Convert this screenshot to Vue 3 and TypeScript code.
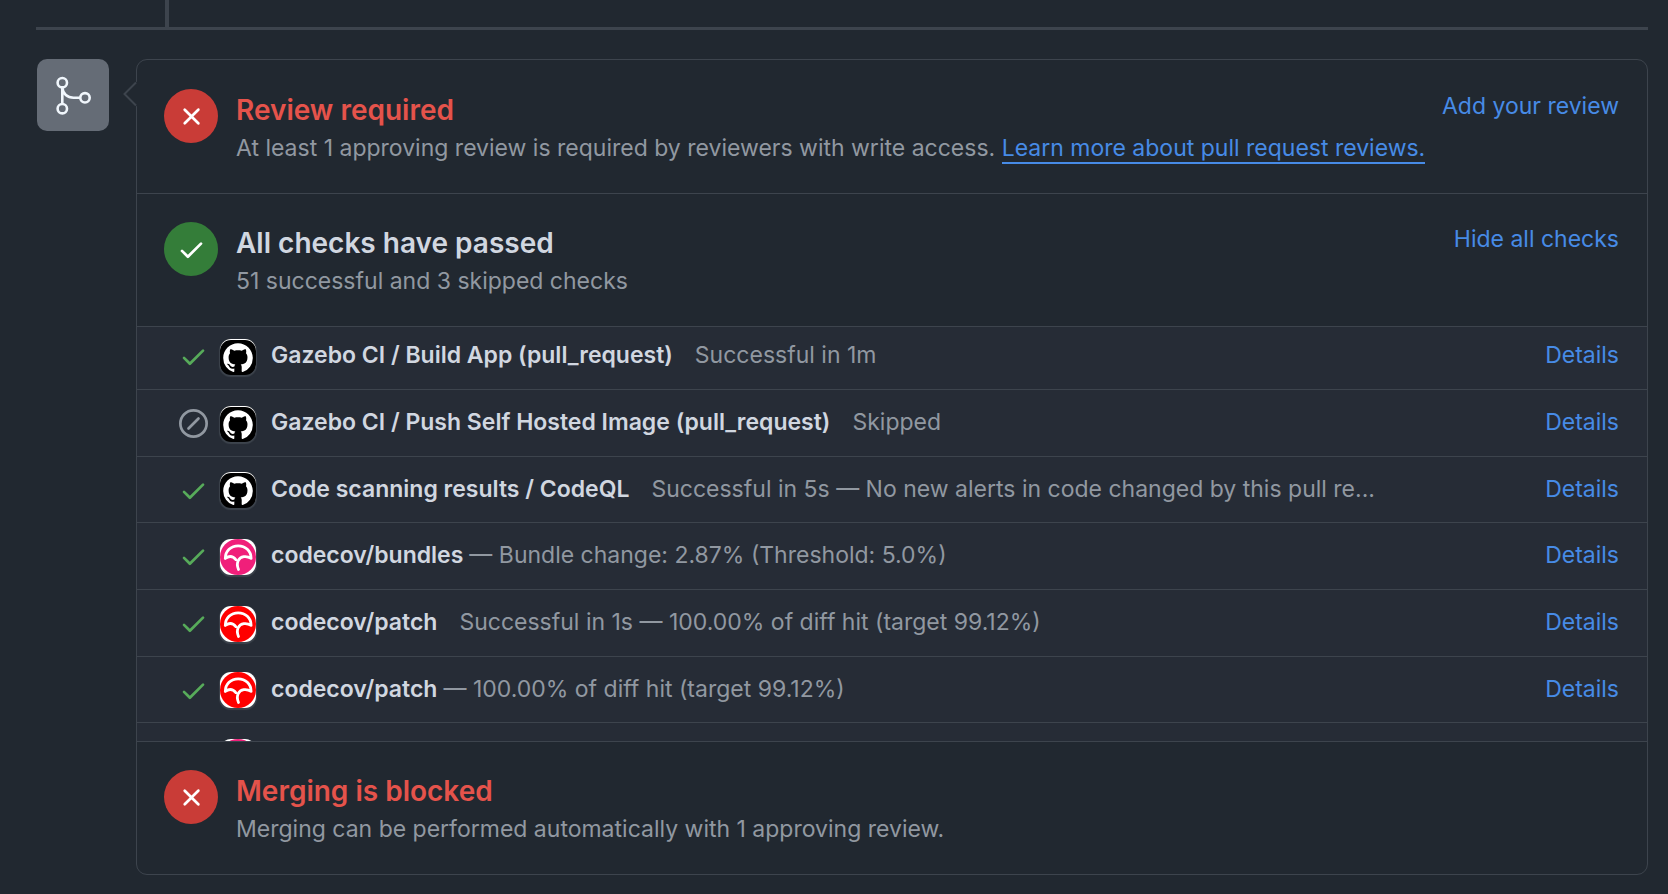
<script setup lang="ts">
type AppKind = 'github' | 'codecov-pink' | 'codecov-red'

interface Check {
  id: number
  name: string
  app: AppKind
  skipped?: boolean
  status?: string
  description?: string
}

const checks: Check[] = [
  { id: 1, name: 'Gazebo CI / Build App (pull_request)', app: 'github', status: 'Successful in 1m' },
  { id: 2, name: 'Gazebo CI / Push Self Hosted Image (pull_request)', app: 'github', skipped: true, status: 'Skipped' },
  { id: 3, name: 'Code scanning results / CodeQL', app: 'github', status: 'Successful in 5s — No new alerts in code changed by this pull re...' },
  { id: 4, name: 'codecov/bundles', app: 'codecov-pink', description: '— Bundle change: 2.87% (Threshold: 5.0%)' },
  { id: 5, name: 'codecov/patch', app: 'codecov-red', status: 'Successful in 1s — 100.00% of diff hit (target 99.12%)' },
  { id: 6, name: 'codecov/patch', app: 'codecov-red', description: '— 100.00% of diff hit (target 99.12%)' },
  { id: 7, name: '', app: 'codecov-pink' },
]

const checkPath =
  'M13.78 4.22a.75.75 0 0 1 0 1.06l-7.25 7.25a.75.75 0 0 1-1.06 0L2.22 9.28a.751.751 0 0 1 .018-1.042.751.751 0 0 1 1.042-.018L6 10.94l6.72-6.72a.75.75 0 0 1 1.06 0Z'
const crossPath =
  'M3.72 3.72a.75.75 0 0 1 1.06 0L8 6.94l3.22-3.22a.749.749 0 0 1 1.275.326.749.749 0 0 1-.215.734L9.06 8l3.22 3.22a.749.749 0 0 1-.326 1.275.749.749 0 0 1-.734-.215L8 9.06l-3.22 3.22a.751.751 0 0 1-1.042-.018.751.751 0 0 1-.018-1.042L6.94 8 3.72 4.78a.75.75 0 0 1 0-1.06Z'
const skipPath =
  'M8 0a8 8 0 1 1 0 16A8 8 0 0 1 8 0ZM1.5 8a6.5 6.5 0 1 0 13 0 6.5 6.5 0 0 0-13 0Zm9.78-2.22-5.5 5.5a.749.749 0 0 1-1.275-.326.749.749 0 0 1 .215-.734l5.5-5.5a.751.751 0 0 1 1.042.018.751.751 0 0 1 .018 1.042Z'
const githubPath =
  'M8 0c4.42 0 8 3.58 8 8a8.013 8.013 0 0 1-5.45 7.59c-.4.08-.55-.17-.55-.38 0-.27.01-1.13.01-2.2 0-.75-.25-1.23-.54-1.48 1.78-.2 3.65-.88 3.65-3.95 0-.88-.31-1.59-.82-2.15.08-.2.36-1.02-.08-2.12 0 0-.67-.22-2.2.82-.64-.18-1.32-.27-2-.27-.68 0-1.36.09-2 .27-1.53-1.03-2.2-.82-2.2-.82-.44 1.1-.16 1.92-.08 2.12-.51.56-.82 1.28-.82 2.15 0 3.06 1.86 3.75 3.64 3.95-.23.2-.44.55-.51 1.07-.46.21-1.61.55-2.33-.66-.15-.24-.6-.83-1.23-.82-.67.01-.27.38.01.53.34.19.73.9.82 1.13.16.45.68 1.31 2.69.94 0 .67.01 1.3.01 1.49 0 .21-.15.45-.55.38A7.995 7.995 0 0 1 0 8c0-4.42 3.58-8 8-8Z'
</script>

<template>
  <main class="page">
    <div class="timeline-end"><span class="timeline-line"></span></div>
    <div class="merge">
      <div class="merge-badge">
        <svg viewBox="0 0 72 72" fill="none" stroke="currentColor" stroke-width="2.6" aria-hidden="true">
          <circle cx="25.3" cy="23.7" r="4.7" />
          <circle cx="25.3" cy="49.7" r="4.7" />
          <circle cx="48" cy="38.8" r="4.7" />
          <path d="M25.3 28.4V45M25.3 28.4C25.8 35 30.5 38.8 36.5 38.8H43.3" />
        </svg>
      </div>
      <div class="box">
        <svg class="caret" viewBox="0 0 14 28" aria-hidden="true">
          <path class="caret-fill" d="M14 1.500 1.500 14 14 26.500Z" />
          <path class="caret-line" d="M13 2.500 1.500 14 13 25.500" />
        </svg>

        <section class="section">
          <span class="status status-danger">
            <svg viewBox="0 0 16 16" aria-hidden="true"><path :d="crossPath" /></svg>
          </span>
          <div class="summary">
            <h3 class="title title-danger">Review required</h3>
            <p class="text">
              At least 1 approving review is required by reviewers with write access.
              <a class="link link-underlined" href="#reviews">Learn more about pull request reviews.</a>
            </p>
          </div>
          <a class="link action" href="#review">Add your review</a>
        </section>

        <section class="section">
          <span class="status status-success">
            <svg viewBox="0 0 16 16" aria-hidden="true"><path :d="checkPath" /></svg>
          </span>
          <div class="summary">
            <h3 class="title">All checks have passed</h3>
            <p class="text">51 successful and 3 skipped checks</p>
          </div>
          <button class="link action" type="button">Hide all checks</button>
        </section>

        <div class="checks-view">
          <ul class="checks">
            <li v-for="check in checks" :key="check.id" class="check">
              <svg class="check-state" :class="{ skipped: check.skipped }" viewBox="0 0 16 16" aria-hidden="true">
                <path :d="check.skipped ? skipPath : checkPath" />
              </svg>
              <span class="avatar" :class="check.app">
                <svg v-if="check.app === 'github'" viewBox="0 0 36 36" aria-hidden="true">
                  <path transform="translate(3.200 4.200) scale(1.85)" fill="#fff" :d="githubPath" />
                </svg>
                <svg v-else viewBox="0 0 36 36" aria-hidden="true">
                  <circle class="disc" cx="18" cy="18" r="18" />
                  <path
                    class="umbrella"
                    d="M15.800 20.600C13 17.200 9 16.800 5.300 19.400C5.300 12 11 6.800 18.200 6.800S31.100 12 31.100 19.400C26.500 16.400 20.500 17 18.200 21.700C16.700 24.700 17.300 27.600 18.500 30.500"
                  />
                </svg>
              </span>
              <p class="check-text">
                <strong class="check-name">{{ check.name }}</strong>
                <span v-if="check.status" class="check-status">{{ check.status }}</span>
                <span v-if="check.description" class="check-description">{{ check.description }}</span>
              </p>
              <a v-if="check.name" class="link" :href="`#check-${check.id}`">Details</a>
            </li>
          </ul>
        </div>

        <section class="section">
          <span class="status status-danger">
            <svg viewBox="0 0 16 16" aria-hidden="true"><path :d="crossPath" /></svg>
          </span>
          <div class="summary">
            <h3 class="title title-danger">Merging is blocked</h3>
            <p class="text">Merging can be performed automatically with 1 approving review.</p>
          </div>
        </section>
      </div>
    </div>
  </main>
</template>

<style>
body {
  margin: 0;
  background: #212830;
}
</style>

<style scoped>
.page {
  box-sizing: border-box;
  padding: 0 20px 16px 36px;
  background: #212830;
  color: #d1d7e0;
  font-family: Inter, "Liberation Sans", sans-serif;
  font-size: 23px;
  line-height: 36px;
}
.timeline-end {
  display: flex;
  height: 27px;
  padding-left: 129px;
  border-bottom: 3px solid #3d444d;
}
.timeline-line {
  width: 4px;
  background: #3d444d;
}
.merge {
  display: flex;
  align-items: flex-start;
  gap: 27px;
  padding: 29px 0 0 1px;
}
.merge-badge {
  flex: none;
  width: 72px;
  height: 72px;
  border-radius: 10px;
  background: #656c76;
  color: #f0f6fc;
}
.merge-badge svg {
  display: block;
}
.box {
  position: relative;
  flex: 1;
  min-width: 0;
  padding-top: 1px;
  border: 1px solid #3d444d;
  border-radius: 11px;
}
.caret {
  position: absolute;
  top: 20px;
  left: -14px;
  width: 14px;
  height: 28px;
}
.caret-fill {
  fill: #212830;
}
.caret-line {
  fill: none;
  stroke: #3d444d;
  stroke-width: 2;
}
.section {
  display: flex;
  align-items: flex-start;
  padding: 28px 28px 26px 27px;
}
.section + .section {
  border-top: 1px solid #3d444d;
}
.status {
  display: flex;
  flex: none;
  align-items: center;
  justify-content: center;
  width: 54px;
  height: 54px;
  border-radius: 50%;
}
.status svg {
  width: 29px;
  height: 29px;
  fill: #fff;
}
.status-danger {
  background: #c93c37;
}
.status-success {
  background: #347d39;
}
.summary {
  flex: 1;
  min-width: 0;
  padding: 2px 0 0 18px;
}
.title {
  margin: 0;
  font-size: 28px;
  font-weight: 600;
  line-height: 38px;
}
.title-danger {
  color: #e5534b;
}
.text {
  margin: 0;
  color: #9198a1;
  line-height: 38px;
}
.link {
  flex: none;
  color: #478be6;
  text-decoration: none;
}
.link-underlined {
  border-bottom: 2px solid #478be6;
}
.action {
  padding: 0;
  border: 0;
  background: none;
  font: inherit;
  line-height: 34px;
  cursor: pointer;
}
.checks-view {
  height: 414px;
  overflow: hidden;
  border-top: 1px solid #3d444d;
  border-bottom: 1px solid #3d444d;
  background: #262c36;
}
.checks {
  display: grid;
  grid-auto-rows: 67px 67px 66px;
  margin: -4px 0 0;
  padding: 0;
  list-style: none;
}
.check {
  display: flex;
  align-items: center;
  box-sizing: border-box;
  min-width: 0;
  padding: 0 28px 2px 42px;
  border-bottom: 1px solid #3d444d;
}
.check-state {
  flex: none;
  width: 29px;
  height: 29px;
  margin-top: 3px;
  fill: #57ab5a;
}
.check-state.skipped {
  fill: #9198a1;
}
.avatar {
  flex: none;
  width: 36px;
  height: 36px;
  margin: 3px 15px 0 12px;
  border-radius: 11px;
  overflow: hidden;
  background: #fff;
  box-shadow: 0 1px 1px 1px #3d444d;
}
.avatar svg {
  display: block;
}
.github {
  background: #000;
  box-shadow: 0 1px 1px 1px #3d444d, inset 0 1px 0 #fff;
}
.codecov-pink {
  color: #f01f7a;
}
.codecov-red {
  color: #ff0000;
}
.disc {
  fill: currentColor;
}
.umbrella {
  fill: none;
  stroke: #fff;
  stroke-width: 2.8;
  stroke-linecap: round;
  stroke-linejoin: round;
}
.check-text {
  flex: 1;
  min-width: 0;
  margin: 0 160px 0 0;
  overflow: hidden;
  color: #9198a1;
  text-overflow: ellipsis;
  white-space: nowrap;
}
.check-name {
  color: #d1d7e0;
  font-weight: 600;
}
.check-status {
  margin-left: 22px;
}
.check-description {
  margin-left: 6px;
}
</style>
